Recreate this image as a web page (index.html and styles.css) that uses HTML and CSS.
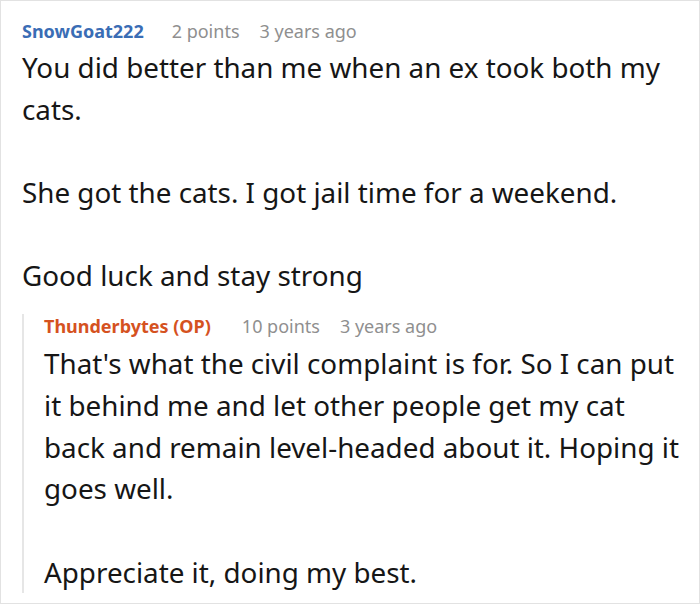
FILE: index.html
```html
<!DOCTYPE html>
<html>
<head>
<meta charset="utf-8">
<link rel="stylesheet" href="styles.css">
</head>
<body>
<div class="thread">
  <div class="comment">
    <div class="meta"><span class="author">SnowGoat222</span><span class="info">2 points</span><span class="info">3 years ago</span></div>
    <div class="body">
      <p>You did better than me when an ex took both my cats.</p>
      <p>She got the cats. I got jail time for a weekend.</p>
      <p>Good luck and stay strong</p>
    </div>
    <div class="reply">
      <div class="meta"><span class="author op">Thunderbytes (OP)</span><span class="info">10 points</span><span class="info">3 years ago</span></div>
      <div class="body reply-body">
        <p>That's what the civil complaint is for. So I can put it behind me and let other people get my cat back and remain level-headed about it. Hoping it goes well.</p>
        <p>Appreciate it, doing my best.</p>
      </div>
    </div>
  </div>
</div>
</body>
</html>
```
FILE: styles.css
```css
html, body { margin: 0; padding: 0; background: #fff; }
.thread {
  width: 700px;
  height: 604px;
  box-sizing: border-box;
  border: 1px solid #e2e2e2;
  overflow: hidden;
  font-family: "Noto Sans", sans-serif;
  color: #161616;
}
.comment { padding: 18px 14px 0 21px; }
.meta { display: flex; font-size: 18px; line-height: 24px; }
.author { font-weight: 700; color: #3a6db5; margin-right: 28px; }
.author.op { color: #d5521f; margin-right: 31px; }
.info { color: #8f8f8f; margin-right: 20px; }
.body { font-size: 27.8px; line-height: 41.7px; margin-top: 4px; }
.reply-body { margin-top: 5px; }
.body p { margin: 0 0 41.7px 0; }
.body p:last-child { margin-bottom: 0; }
.reply {
  margin-top: 17px;
  border-left: 2px solid #e6e6e6;
  padding-left: 20px;
}
```
